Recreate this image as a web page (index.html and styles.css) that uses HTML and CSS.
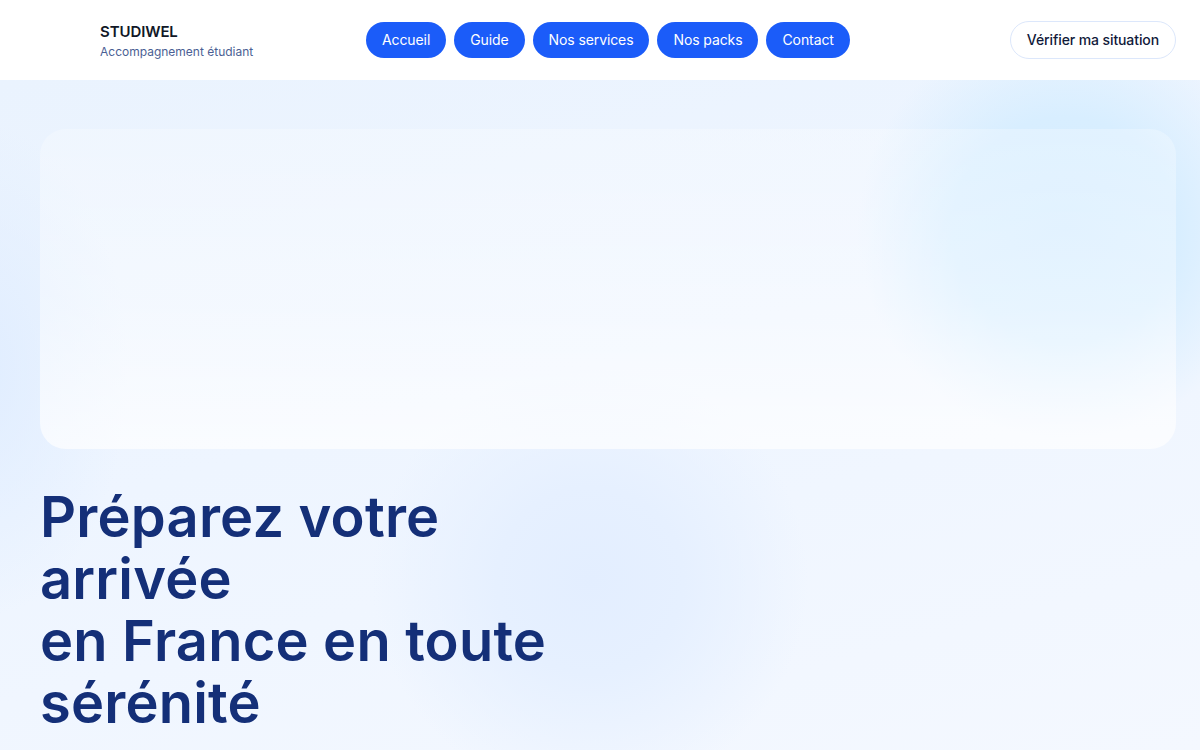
FILE: index.html
```html
<!DOCTYPE html>
<html lang="fr">
<head>
<meta charset="utf-8">
<title>Studiwel</title>
<link rel="stylesheet" href="styles.css">
</head>
<body>
<header class="topbar">
  <div class="brand">
    <div class="brand-name">STUDIWEL</div>
    <div class="brand-sub">Accompagnement étudiant</div>
  </div>
  <nav class="nav">
    <a class="pill" href="#">Accueil</a>
    <a class="pill" href="#">Guide</a>
    <a class="pill" href="#">Nos services</a>
    <a class="pill" href="#">Nos packs</a>
    <a class="pill" href="#">Contact</a>
  </nav>
  <a class="cta" href="#">Vérifier ma situation</a>
</header>
<main class="hero">
  <div class="blob blob-right"></div>
  <div class="blob blob-center"></div>
  <div class="blob blob-left"></div>
  <div class="glass"></div>
  <h1 class="title">Préparez votre arrivée<br>en France en toute sérénité</h1>
</main>
</body>
</html>
```
FILE: styles.css
```css
* { box-sizing: border-box; }
html, body { margin: 0; padding: 0; }
body {
  font-family: Inter, "Noto Sans", "Liberation Sans", sans-serif;
  background: #f3f8ff;
  width: 1200px;
  height: 750px;
  overflow: hidden;
}
.topbar {
  height: 80px;
  background: #ffffff;
  display: flex;
  align-items: center;
  padding: 0 24px 0 100px;
  position: relative;
  z-index: 2;
}
.brand {
  width: 266px;
  display: flex;
  flex-direction: column;
  gap: 3px;
  margin-top: 1px;
}
.brand-name {
  font-size: 15px;
  font-weight: 600;
  color: #111827;
  letter-spacing: -0.1px;
}
.brand-sub {
  font-size: 12px;
  color: #4b5f94;
}
.nav {
  display: flex;
  gap: 8px;
}
.pill {
  height: 36px;
  padding: 0 16px;
  display: flex;
  align-items: center;
  border-radius: 18px;
  background: #1b5cf9;
  color: #ffffff;
  font-size: 14px;
  text-decoration: none;
  letter-spacing: -0.1px;
  padding-bottom: 1px;
}
.cta {
  margin-left: auto;
  height: 38px;
  padding: 0 16px 1px;
  display: flex;
  align-items: center;
  border: 1px solid #dce7fb;
  border-radius: 19px;
  background: #ffffff;
  color: #111a3a;
  font-size: 14px;
  font-weight: 500;
  text-decoration: none;
  letter-spacing: -0.1px;
}
.hero {
  position: relative;
  height: 670px;
  padding: 49px 24px 0 40px;
  background: linear-gradient(165deg, #eaf3fe 0%, #eef5ff 45%, #f4f8ff 100%);
  overflow: hidden;
}
.blob {
  position: absolute;
  border-radius: 50%;
}
.blob-right {
  width: 420px;
  height: 420px;
  left: 855px;
  top: -60px;
  background: radial-gradient(circle, #d4ecff 0%, #d8eeff 38%, rgba(221,240,255,0) 70%);
}
.blob-center {
  width: 460px;
  height: 420px;
  left: 360px;
  top: 290px;
  background: radial-gradient(circle, #e3eeff 0%, #e6f0ff 30%, rgba(230,240,255,0) 70%);
}
.blob-left {
  width: 300px;
  height: 500px;
  left: -170px;
  top: 40px;
  background: radial-gradient(ellipse, #e0edff 0%, rgba(224,237,255,0) 70%);
}
.glass {
  position: relative;
  z-index: 1;
  height: 320px;
  border-radius: 26px;
  background: linear-gradient(180deg, rgba(255,255,255,0.25) 0%, rgba(255,255,255,0.4) 55%, rgba(255,255,255,0.7) 100%);
}
.title {
  position: relative;
  z-index: 1;
  margin: 37px 0 0 0;
  font-size: 56px;
  line-height: 62px;
  font-weight: 600;
  letter-spacing: 0.2px;
  color: #142f78;
  max-width: 580px;
}
```
